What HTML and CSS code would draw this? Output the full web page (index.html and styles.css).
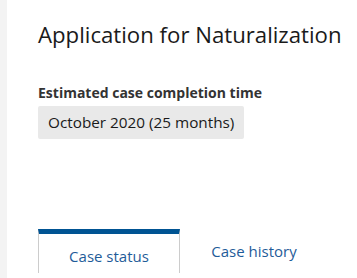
FILE: index.html
```html
<!DOCTYPE html>
<html lang="en">
<head>
    <meta charset="UTF-8">
    <meta name="viewport" content="width=device-width, initial-scale=1.0">
    <title>Case Status</title>
    <link rel="stylesheet" href="styles.css">
</head>
<body>

    <div class="page">
        <div class="side-strip"></div>

        <main class="content">
            <h1 class="case-title">Application for Naturalization</h1>

            <div class="estimate">
                <div class="estimate-label">Estimated case completion time</div>
                <div class="estimate-value">October 2020 (25 months)</div>
            </div>

            <!-- Tabs -->
            <div class="tabs">
                <div class="tab active">Case status</div>
                <div class="tab">Case history</div>
            </div>
        </main>
    </div>

</body>
</html>
```

FILE: styles.css
```css
body {
    margin: 0;
    font-family: "Open Sans", Lato, sans-serif;
    background: #fff;
    color: #1a1a1a;
}

.page {
    display: flex;
    min-height: 278px;
}

.side-strip {
    width: 7px;
    background-color: #f3f3f3;
    flex-shrink: 0;
}

.content {
    padding-left: 31px;
    flex: 1;
}

.case-title {
    margin: 0;
    padding-top: 22px;
    font-size: 22.2px;
    font-weight: normal;
    line-height: 25px;
    white-space: nowrap;
}

.estimate {
    margin-top: 37px;
}

.estimate-label {
    font-size: 14px;
    font-weight: bold;
    color: #333;
    line-height: 18px;
}

.estimate-value {
    display: inline-block;
    margin-top: 4px;
    padding: 0 10px;
    background-color: #e9e9e9;
    border-radius: 2px;
    font-size: 15.3px;
    line-height: 33px;
}

.tabs {
    display: flex;
    margin-top: 90px;
}

.tab {
    width: 142px;
    height: 44px;
    padding-top: 12px;
    box-sizing: border-box;
    text-align: center;
    font-size: 15px;
    color: #1f5c99;
}

.tab + .tab {
    padding-left: 6px;
}

.tab.active {
    border-top: 5px solid #005493;
    border-left: 1px solid #ccc;
    border-right: 1px solid #ccc;
}
```
